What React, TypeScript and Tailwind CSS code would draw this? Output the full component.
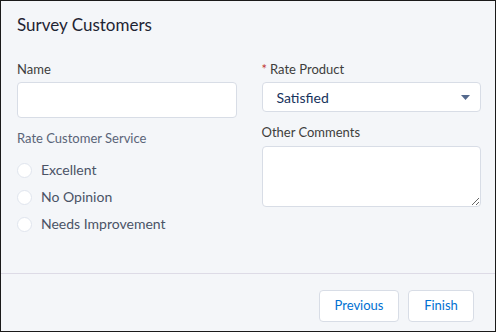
export default function App() {
    const options = ['Excellent', 'No Opinion', 'Needs Improvement'];

    return (
        <div className="w-[496px] h-[332px] border border-[#1a1a1a] bg-[#f4f6f9] flex flex-col font-['Lato',sans-serif] text-[#16325c]">
            <div className="px-4 pt-[13px]">
                <h1 className="text-[17px] leading-[22px] text-[#1e2433]">Survey Customers</h1>
            </div>

            <div className="flex-1 grid grid-cols-2 gap-x-[25px] pl-4 pr-[14px] pt-[24px]">
                {/* left column */}
                <div>
                    <label className="block text-[13px] leading-[18px] text-[#3e3e3c]">Name</label>
                    <input
                        type="text"
                        className="mt-[4px] block w-full h-[36px] rounded-[4px] border border-[#d8dde6] bg-white px-3 outline-none"
                    />
                    <p className="mt-[11px] text-[13px] leading-[18px] text-[#5a6478]">Rate Customer Service</p>
                    <div className="mt-[14px] flex flex-col gap-[9px]">
                        {options.map((o) => (
                            <label key={o} className="flex items-center gap-[9px] text-[14px] leading-[18px] text-[#4a5366]">
                                <span className="w-[15px] h-[15px] rounded-full border border-[#e0e5ee] bg-white" />
                                {o}
                            </label>
                        ))}
                    </div>
                </div>

                {/* right column */}
                <div>
                    <label className="block text-[13px] leading-[18px] text-[#3e3e3c]">
                        <span className="text-[#c23934] mr-[3px]">*</span>Rate Product
                    </label>
                    <div className="mt-[4px] relative h-[30px] rounded-[4px] border border-[#d8dde6] bg-white flex items-center pl-[14px]">
                        <span className="text-[14px] text-[#16325c]">Satisfied</span>
                        <svg className="absolute right-[10px] top-[12px]" width="9" height="5" viewBox="0 0 9 5">
                            <path d="M0 0h9L4.5 5z" fill="#54698d" />
                        </svg>
                    </div>
                    <label className="mt-[11px] block text-[13px] leading-[18px] text-[#3e3e3c]">Other Comments</label>
                    <textarea className="mt-[5px] block w-full h-[61px] rounded-[4px] border border-[#d8dde6] bg-white outline-none" />
                </div>
            </div>

            <div className="border-t border-[#dddbe6] flex justify-end gap-[9px] pt-[16px] pb-[9px] pr-[21px]">
                <button className="h-[32px] w-[80px] rounded-[4px] border border-[#d8dde6] bg-white text-[13px] text-[#0070d2]">Previous</button>
                <button className="h-[32px] w-[66px] rounded-[4px] border border-[#d8dde6] bg-white text-[13px] text-[#0070d2]">Finish</button>
            </div>
        </div>
    );
}
